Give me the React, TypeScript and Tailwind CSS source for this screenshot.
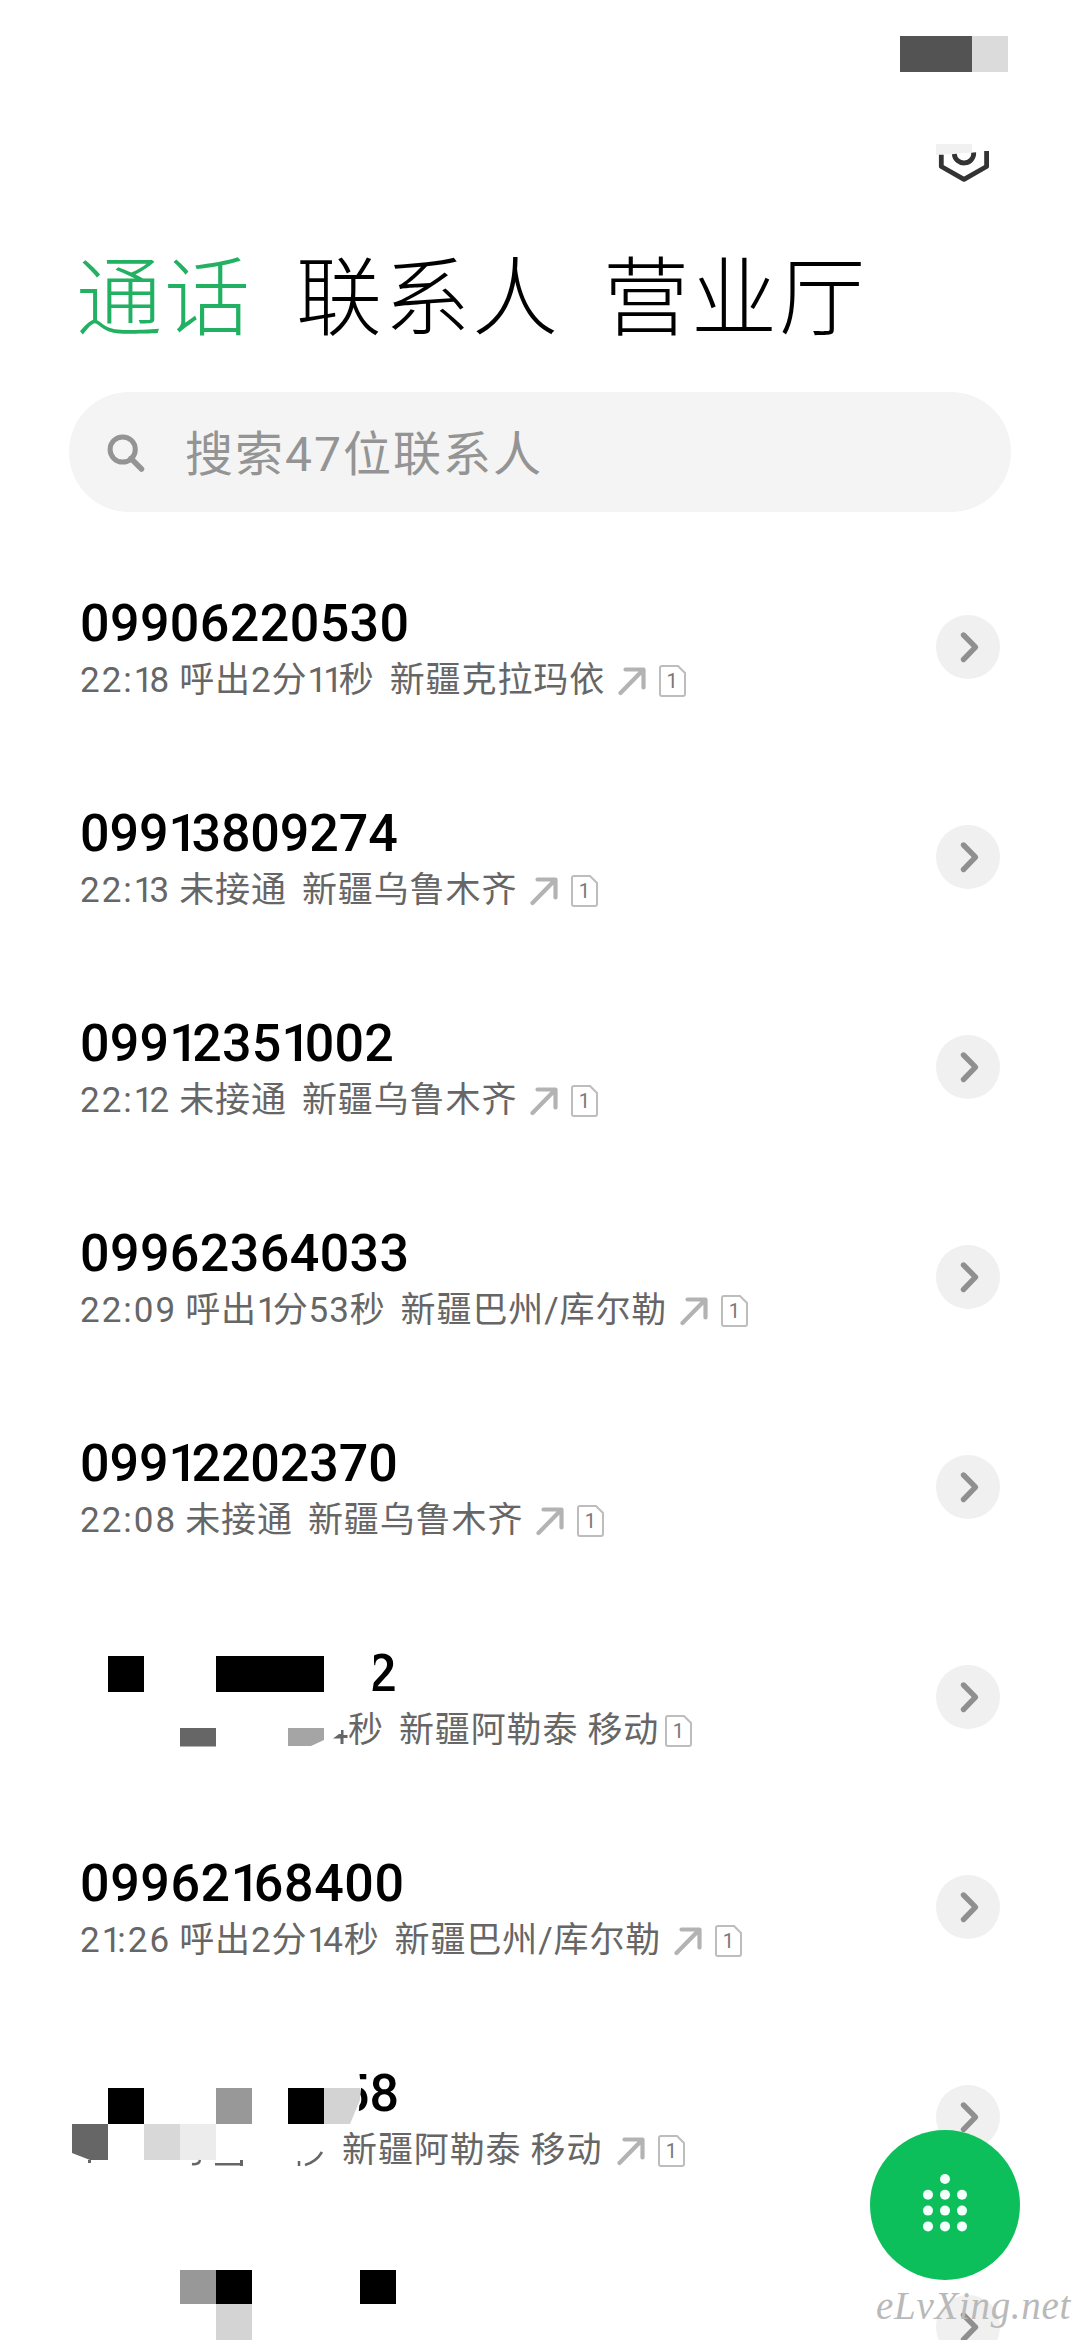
import React from "react";

type Call = {
  number: string;
  spacing: string;
  time: string;
  status: string;
  place: string;
};

const calls: Call[] = [
  { number: "09906220530", spacing: "tracking-[0.4px]", time: "22:18", status: "呼出2分11秒", place: "新疆克拉玛依" },
  { number: "09913809274", spacing: "tracking-[-0.1px]", time: "22:13", status: "未接通", place: "新疆乌鲁木齐" },
  { number: "09912351002", spacing: "tracking-[0.2px]", time: "22:12", status: "未接通", place: "新疆乌鲁木齐" },
  { number: "09962364033", spacing: "tracking-[0.4px]", time: "22:09", status: "呼出1分53秒", place: "新疆巴州/库尔勒" },
  { number: "09912202370", spacing: "tracking-[-0.1px]", time: "22:08", status: "未接通", place: "新疆乌鲁木齐" },
];

const later: Call = {
  number: "09962168400",
  spacing: "tracking-[0.6px]",
  time: "21:26",
  status: "呼出2分14秒",
  place: "新疆巴州/库尔勒",
};

// the digit 1 is narrower than the others
function Digits({ text, narrow }: { text: string; narrow: string }) {
  return (
    <>
      {text.split(/(1)/).map((part, i) =>
        part === "1" ? (
          <span key={i} className={narrow}>
            1
          </span>
        ) : (
          part
        )
      )}
    </>
  );
}

function Chevron() {
  return (
    <div className="flex size-16 shrink-0 items-center justify-center rounded-full bg-[#f0f0f0]">
      <svg width="64" height="64" viewBox="0 0 64 64" fill="none" stroke="#8f8f8f" strokeWidth="5.4" strokeLinecap="round" strokeLinejoin="round">
        <path d="M27.5 20 L39.5 32.2 L27.5 44.5" />
      </svg>
    </div>
  );
}

function OutArrow() {
  return (
    <svg className="mr-[13px] shrink-0" width="28" height="30" viewBox="0 0 28 30" fill="none" stroke="#b3b3b3" strokeWidth="4.2" strokeLinecap="round" strokeLinejoin="round">
      <path d="M2.5 27 L25 4 M7.5 3.5 H25.5 V21.5" />
    </svg>
  );
}

function Sim() {
  return (
    <div className="relative flex h-8 w-[27px] shrink-0 items-center justify-center">
      <svg className="absolute inset-0" width="27" height="32" viewBox="0 0 27 32" fill="none" stroke="#bdbdbd" strokeWidth="2">
        <path d="M3 1 H19 L26 8 V29 Q26 31 24 31 H3 Q1 31 1 29 V3 Q1 1 3 1 Z" />
      </svg>
      <span className="font-['Roboto',sans-serif] text-[20px] leading-none text-[#777]">1</span>
    </div>
  );
}

function Row({ children }: { children: React.ReactNode }) {
  return (
    <div className="flex h-[210px] shrink-0 items-center justify-between pl-20 pr-20">
      {children}
      <Chevron />
    </div>
  );
}

function CallRow({ call }: { call: Call }) {
  return (
    <Row>
      <div className="pt-[9px]">
        <div className={`h-[58px] text-[52px] font-medium leading-[58px] text-black ${call.spacing}`}>
          <Digits text={call.number} narrow="tracking-[-6.5px]" />
        </div>
        <div className="flex h-[56px] items-center whitespace-nowrap text-[35px] leading-[56px] tracking-[0.9px] text-[#666]">
          <span className="mr-[8px] tracking-[2px]">
            <Digits text={call.time} narrow="tracking-[-4px]" />
          </span>
          <span className="mr-[15px]">
            <Digits text={call.status} narrow="tracking-[-4px]" />
          </span>
          <span className="mr-[13px]">{call.place}</span>
          <OutArrow />
          <Sim />
        </div>
      </div>
    </Row>
  );
}

// calls whose number and duration are pixelated
function HiddenRowA() {
  return (
    <Row>
      <div className="relative pt-[9px]">
        <div className="h-[58px] pl-[287px] text-[52px] font-medium leading-[58px] text-black">2</div>
        <div className="flex h-[56px] items-center whitespace-nowrap pl-[268px] text-[35px] leading-[56px] tracking-[0.9px] text-[#666]">
          <span className="mr-[15px]">秒</span>
          <span className="mr-[9px]">新疆阿勒泰</span>
          <span className="mr-[6px]">移动</span>
          <Sim />
        </div>
        <svg className="absolute left-[-12px] top-[4px]" width="330" height="114" viewBox="68 1640 330 114">
          <path d="M108 1656h36v36h-36zM216 1656h108v36H216z" fill="#000" />
          <path d="M180 1728h36v18.500h-36z" fill="#666" />
          <path d="M288 1728h36v12l-13 6h-23z" fill="#a5a5a5" />
          <path d="M333 1738.500l6-4.500h2v-4h2.500v5h4v3h-4v6h-3v-5.500z" fill="#666" />
          <path d="M364 1648h10v14l1 12-3 20h-8z" fill="#fff" />
        </svg>
      </div>
    </Row>
  );
}

function HiddenRowB() {
  return (
    <Row>
      <div className="relative pt-[9px]">
        <div className="h-[58px] pl-[260px] text-[52px] font-medium leading-[58px] text-black">58</div>
        <div className="flex h-[56px] items-center whitespace-nowrap pl-[262px] text-[35px] leading-[56px] tracking-[0.9px] text-[#666]">
          <span className="mr-[9px]">新疆阿勒泰</span>
          <span className="mr-[15px]">移动</span>
          <OutArrow />
          <Sim />
        </div>
        <svg className="absolute left-[-12px] top-[4px]" width="330" height="114" viewBox="68 2060 330 114">
          <path d="M335 2060h23l3 28-4 42h-22z" fill="#fff" />
          <path d="M108 2088h36v36h-36zM288 2088h36v36h-36z" fill="#000" />
          <path d="M216 2088h36v36h-36z" fill="#989898" />
          <path d="M324 2088h36v12l-10 24h-26z" fill="#d3d3d3" />
          <path d="M72 2124h36v36H90l-18-7z" fill="#666" />
          <path d="M144 2124h36v36h-36z" fill="#d8d8d8" />
          <path d="M180 2124h36v36h-36z" fill="#ececec" />
          <path d="M88 2160h3v3h-3zM215 2163h28v2.500h-28zM240 2160h3v6h-3z" fill="#666" />
          <path d="M192 2164q7 1 8-4M299 2161v5M305 2165q11-3 17-13" fill="none" stroke="#666" strokeWidth="2.500" />
        </svg>
      </div>
    </Row>
  );
}

function HiddenRowC() {
  return (
    <Row>
      <svg className="-ml-2" width="330" height="114" viewBox="72 2270 330 114">
        <path d="M180 2268h36v36h-36z" fill="#989898" />
        <path d="M216 2268h36v36h-36zM360 2268h36v36h-36z" fill="#000" />
        <path d="M216 2304h36v36h-36z" fill="#d4d4d4" />
      </svg>
    </Row>
  );
}

function App() {
  // one dot on the first line, then three lines of three
  const dots = [1, 3, 4, 5, 6, 7, 8, 9, 10, 11];
  return (
    <div className="relative flex h-[2340px] w-[1080px] flex-col overflow-hidden bg-white font-['Roboto','Noto_Sans_CJK_SC',sans-serif]">
      {/* status bar */}
      <div className="mr-[72px] mt-9 flex h-9 shrink-0 justify-end">
        <div className="w-[72px] bg-[#535353]"></div>
        <div className="w-9 bg-[#dbdbdb]"></div>
      </div>

      {/* settings */}
      <div className="mt-[72px] flex h-10 shrink-0 justify-end pr-[88px]">
        <svg width="56" height="40" viewBox="936 144 56 40" fill="none" stroke="#333" strokeWidth="4.800">
          <path d="M936 144h36v8.600l-36 2.400z" fill="#f1f1f1" stroke="none" />
          <path d="M941.300 154.700V166.500L964 179.300L986.600 166.500V151" strokeLinejoin="round" />
          <path d="M954.300 154a9.700 9.700 0 1 0 19.400-1.500" />
        </svg>
      </div>

      <div className="mt-[56px] flex h-[120px] shrink-0 items-center whitespace-nowrap pl-[76px] text-[86px] font-light leading-[120px] tracking-[2px] text-black">
        <span className="w-[220px] text-[#22b062]">通话</span>
        <span className="w-[307px]">联系人</span>
        <span>营业厅</span>
      </div>

      <div className="mx-[69px] mt-8 flex h-[120px] shrink-0 items-center rounded-full bg-[#f4f4f4] pl-9">
        <svg width="42" height="42" viewBox="0 0 42 42" fill="none" stroke="#949494" strokeWidth="5">
          <circle cx="17.700" cy="18.500" r="12.600" />
          <path d="M26 27.500L36.500 38" strokeWidth="5.500" strokeLinecap="round" />
        </svg>
        <span className="ml-[38px] pt-[5px] text-[48px] tracking-[2px] text-[#949494]">搜索47位联系人</span>
      </div>

      <div className="mt-[30px] flex flex-col">
        {calls.map((c) => (
          <CallRow key={c.number} call={c} />
        ))}
        <HiddenRowA />
        <CallRow call={later} />
        <HiddenRowB />
        <HiddenRowC />
      </div>

      {/* dial pad button */}
      <div className="absolute left-[870px] top-[2130px] flex size-[150px] items-center justify-center rounded-full bg-[#0cbf5b]">
        <svg width="60" height="70" viewBox="0 0 60 70" fill="#f2fffa">
          {dots.map((n) => (
            <circle key={n} cx={13 + (n % 3) * 17} cy={9 + Math.floor(n / 3) * 15.8} r="5" />
          ))}
        </svg>
      </div>
      <div className="absolute left-[876px] top-[2283px] whitespace-nowrap font-['Liberation_Serif',serif] text-[39px] italic leading-[46px] tracking-[0.7px] text-[#b9b9b9]">
        eLvXing.net
      </div>
    </div>
  );
}

export default App;
